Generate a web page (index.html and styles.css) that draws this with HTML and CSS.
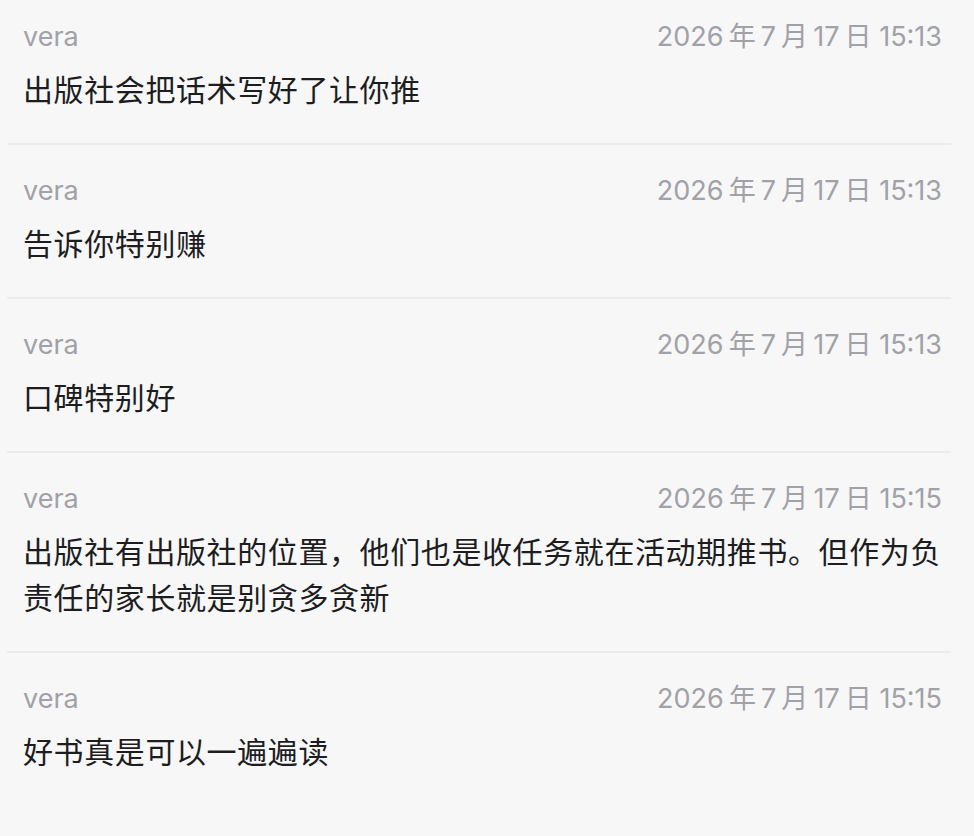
FILE: index.html
```html
<!DOCTYPE html>
<html lang="zh-CN">

<head>
    <meta charset="UTF-8">
    <meta name="viewport" content="width=device-width, initial-scale=1.0">
    <title>评论</title>
    <link rel="stylesheet" href="styles.css">
</head>

<body>
    <!-- Comment list -->
    <div class="comments">
        <div class="comment">
            <div class="meta">
                <span class="author">vera</span>
                <span class="time"><span class="date">2026 年 7 月 17 日</span> 15:13</span>
            </div>
            <p class="body">出版社会把话术写好了让你推</p>
        </div>

        <div class="comment">
            <div class="meta">
                <span class="author">vera</span>
                <span class="time"><span class="date">2026 年 7 月 17 日</span> 15:13</span>
            </div>
            <p class="body">告诉你特别赚</p>
        </div>

        <div class="comment">
            <div class="meta">
                <span class="author">vera</span>
                <span class="time"><span class="date">2026 年 7 月 17 日</span> 15:13</span>
            </div>
            <p class="body">口碑特别好</p>
        </div>

        <div class="comment">
            <div class="meta">
                <span class="author">vera</span>
                <span class="time"><span class="date">2026 年 7 月 17 日</span> 15:15</span>
            </div>
            <p class="body">出版社有出版社的位置，他们也是收任务就在活动期推书。但作为负责任的家长就是别贪多贪新</p>
        </div>

        <div class="comment">
            <div class="meta">
                <span class="author">vera</span>
                <span class="time"><span class="date">2026 年 7 月 17 日</span> 15:15</span>
            </div>
            <p class="body">好书真是可以一遍遍读</p>
        </div>
    </div>
</body>

</html>
```

FILE: styles.css
```css
body {
    margin: 0;
    background-color: #f7f7f7;
    font-family: Inter, "Noto Sans CJK SC", sans-serif;
}

.comments {
    width: 944px;
    margin-left: 7px;
}

.comment {
    padding: 28px 9px 30px 16px;
    border-bottom: 2px solid #ececec;
}

.comment:first-child {
    padding-top: 19px;
}

.comment:last-child {
    border-bottom: none;
}

.meta {
    display: flex;
    justify-content: space-between;
    align-items: baseline;
    height: 36px;
    line-height: 36px;
    font-size: 27px;
    color: #a1a1a8;
}

/* tighter gaps between digits and CJK units */
.date {
    word-spacing: -2.5px;
}

.body {
    margin: 12px 0 0;
    font-size: 30px;
    line-height: 46px;
    letter-spacing: 0.6px;
    color: #1d1d1f;
}
```
